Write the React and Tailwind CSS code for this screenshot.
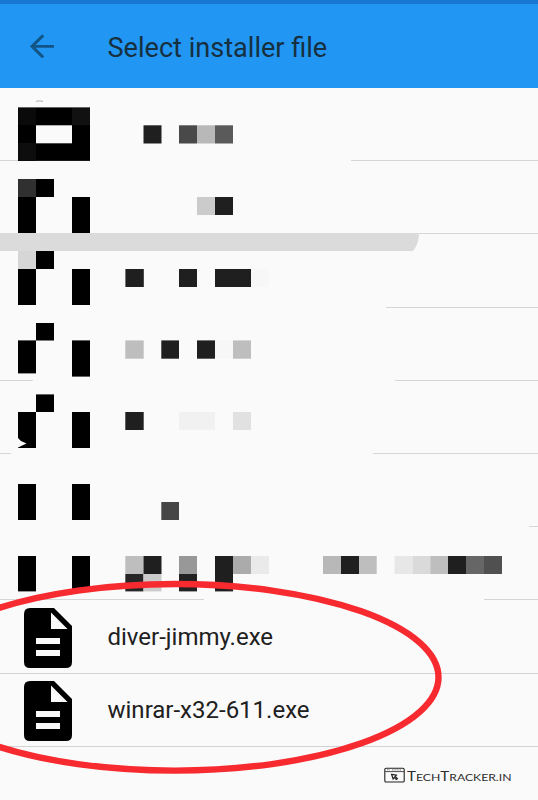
import React from "react";

// Visible parts of each divider: width of the left part, start of the right part.
const dividers = [
  { left: 18, right: 351 },
  { left: 0, right: 419 },
  { left: 0, right: 386 },
  { left: 33, right: 395 },
  { left: 11, right: 373 },
  { left: 0, right: 529 },
  { left: 204, right: 484 },
];

// Censored blocks: x, y, width, height, colour (page coordinates).
const blocks = [
  [18, 107.4, 72, 53.5, "#000"],
  [18, 108, 18, 17, "#0a0a0a"],
  [72, 108, 18, 17, "#111"],
  [18, 143, 18, 18, "#0d0d0d"],
  [36, 125.3, 36, 18, "#fafafa"],
  [143.5, 125.3, 18, 18.2, "#1f1f1f"],
  [179, 125.3, 18, 18.2, "#494949"],
  [197, 125.3, 18, 18.2, "#b8b8b8"],
  [215, 125.3, 18, 18.2, "#5a5a5a"],

  [18, 179, 18, 18, "#303030"],
  [36, 179, 18, 18, "#000"],
  [18, 197, 18, 36, "#000"],
  [72, 197, 18, 36, "#000"],
  [197, 197, 18, 18, "#cbcbcb"],
  [215, 197, 18, 18, "#1f1f1f"],

  [18, 251, 18, 18, "#d6d6d6"],
  [36, 251, 18, 18, "#000"],
  [18, 269, 18, 36, "#000"],
  [72, 269, 18, 36, "#000"],
  [125.4, 269, 18.4, 18, "#1f1f1f"],
  [179, 269, 18, 18, "#1f1f1f"],
  [215, 269, 36, 18, "#1f1f1f"],
  [251, 269, 18, 18, "#f7f7f7"],

  [36, 323, 18, 17.5, "#000"],
  [18, 340.4, 18, 33, "#000"],
  [72, 340.4, 18, 36.2, "#000"],
  [125.3, 340.4, 18.4, 18.3, "#bebebe"],
  [161.3, 340.4, 17.7, 18.3, "#1f1f1f"],
  [197, 340.4, 18, 18.3, "#1f1f1f"],
  [215, 340.4, 18, 18.3, "#f7f7f7"],
  [233, 340.4, 18, 18.3, "#bebebe"],

  [36, 394.4, 18, 17.6, "#000"],
  [18, 412, 18, 36, "#000"],
  [72, 412, 18, 36, "#000"],
  [125.3, 412, 18.4, 18, "#1f1f1f"],
  [179, 412, 36, 18, "#f1f1f1"],
  [233, 412, 18, 18, "#e1e1e1"],

  [18, 484, 18, 36, "#000"],
  [72, 484, 18, 36, "#000"],
  [161.3, 502, 17.7, 18, "#464646"],

  [18, 556, 18, 35.4, "#000"],
  [72, 556, 18, 35.4, "#000"],
  [125.3, 556, 18.2, 18, "#bebebe"],
  [143.5, 556, 18, 18, "#1f1f1f"],
  [179, 556, 18, 18, "#989898"],
  [215, 556, 18, 18, "#1f1f1f"],
  [233, 556, 18, 18, "#ababab"],
  [251, 556, 18, 18, "#eaeaea"],
  [125.3, 574, 18.2, 17.4, "#262626"],
  [143.5, 574, 18, 17.4, "#cbcbcb"],
  [179, 574, 18, 17.4, "#222"],
  [215, 574, 18, 17.4, "#1f1f1f"],
  [323, 556, 18, 18, "#b8b8b8"],
  [341, 556, 18, 18, "#1f1f1f"],
  [359, 556, 17.7, 18, "#bebebe"],
  [394.5, 556, 18, 18, "#e7e7e7"],
  [412.5, 556, 18, 18, "#dadada"],
  [430.3, 556, 18, 18, "#bebebe"],
  [448, 556, 18, 18, "#1f1f1f"],
  [466, 556, 18, 18, "#666"],
  [484, 556, 18, 18, "#505050"],
];

const files = ["diver-jimmy.exe", "winrar-x32-611.exe"];

function Redaction() {
  return (
    <svg
      className="pointer-events-none absolute inset-0"
      width="538"
      height="800"
      viewBox="0 0 538 800"
      aria-hidden="true"
    >
      <path d="M0 233H419Q419 244 413 251H0Z" fill="#dbdbdb" />
      <g>
        {blocks.map(([x, y, w, h, fill], i) => (
          <rect key={i} x={x} y={y} width={w} height={h} fill={fill} />
        ))}
      </g>
      <path d="M18 438L21 441L26.5 443.5L18 447.5Z" fill="#fafafa" />
      <path d="M36 101.3Q39.5 100.5 43 101.3" fill="none" stroke="#999" strokeWidth=".8" />
      <ellipse cx="175" cy="677.3" rx="263.5" ry="93.3" fill="none" stroke="#f72a30" strokeWidth="6.4" />
    </svg>
  );
}

function FileIcon() {
  return (
    <svg className="ml-6 h-[60px] w-12 shrink-0" viewBox="0 0 48 60" aria-hidden="true">
      <path
        fill="#000"
        fillRule="evenodd"
        d="M6 0H30L48 18V54Q48 60 42 60H6Q0 60 0 54V6Q0 0 6 0ZM27 4.5V21H43.5ZM12 30V36H36V30ZM12 42V48H36V42Z"
      />
    </svg>
  );
}

function Watermark() {
  return (
    <div className="flex items-center gap-[2px] pl-[384px] pt-[20px] text-[#222]">
      <svg width="21" height="17" viewBox="0 0 21 17" fill="none" stroke="#222" aria-hidden="true">
        <rect x=".8" y="1.2" width="19.4" height="13.8" rx="1.3" strokeWidth="1.1" />
        <path d="M1 4.6H20" strokeWidth=".8" />
        <path d="M3 2.9H6M8 2.9H17" strokeWidth=".6" strokeDasharray="1 .6" />
        <path d="M7.6 7.4L12.4 8.2L11.2 9.4L13.4 11.6L12.3 12.4L10.2 10.4L9.1 12Z" strokeWidth="1.2" />
      </svg>
      <svg width="106" height="17" viewBox="0 0 106 17" aria-label="TechTracker.in">
        <text y="14.3" fill="#2c2c2c" textLength="104.5" lengthAdjust="spacingAndGlyphs" fontFamily="Lato, sans-serif">
          <tspan fontSize="12.4">T</tspan>
          <tspan fontSize="10">ECH</tspan>
          <tspan fontSize="12.4">T</tspan>
          <tspan fontSize="10">RACKER.IN</tspan>
        </text>
      </svg>
    </div>
  );
}

export default function App() {
  return (
    <main className="relative flex h-[800px] w-[538px] flex-col overflow-hidden bg-[#fafafa] font-[Roboto,sans-serif] text-[#202020]">
      <div className="h-1 shrink-0 bg-[#1976d2]" />
      <header className="flex h-[84px] shrink-0 items-center bg-[#2196f3]">
        <svg className="ml-[30px] h-6 w-6" viewBox="0 0 24 24" fill="none" stroke="#135486" strokeWidth="2.9" aria-hidden="true">
          <path d="M24 12.4H2M13.2 1.4L2 12.4L13.2 23.4" />
        </svg>
        <h1 className="ml-[53.5px] whitespace-nowrap pt-[3px] text-[27.1px] leading-8 text-[#17303f]">
          Select installer file
        </h1>
      </header>

      <ul className="flex flex-col">
        {dividers.map((d, i) => (
          <li key={i} className="flex h-[73.2px] items-end justify-between">
            <span className="h-px bg-[#d6d6d6]" style={{ width: d.left }} />
            <span className="h-px bg-[#d6d6d6]" style={{ width: 538 - d.right }} />
          </li>
        ))}
        {files.map((name) => (
          <li key={name} className="flex h-[73.2px] items-center border-b border-[#d2d2d2] pt-[3px]">
            <FileIcon />
            <span className="ml-[35.5px] whitespace-nowrap pb-[1.6px] text-[24px] leading-7">{name}</span>
          </li>
        ))}
      </ul>

      <Watermark />
      <Redaction />
    </main>
  );
}
